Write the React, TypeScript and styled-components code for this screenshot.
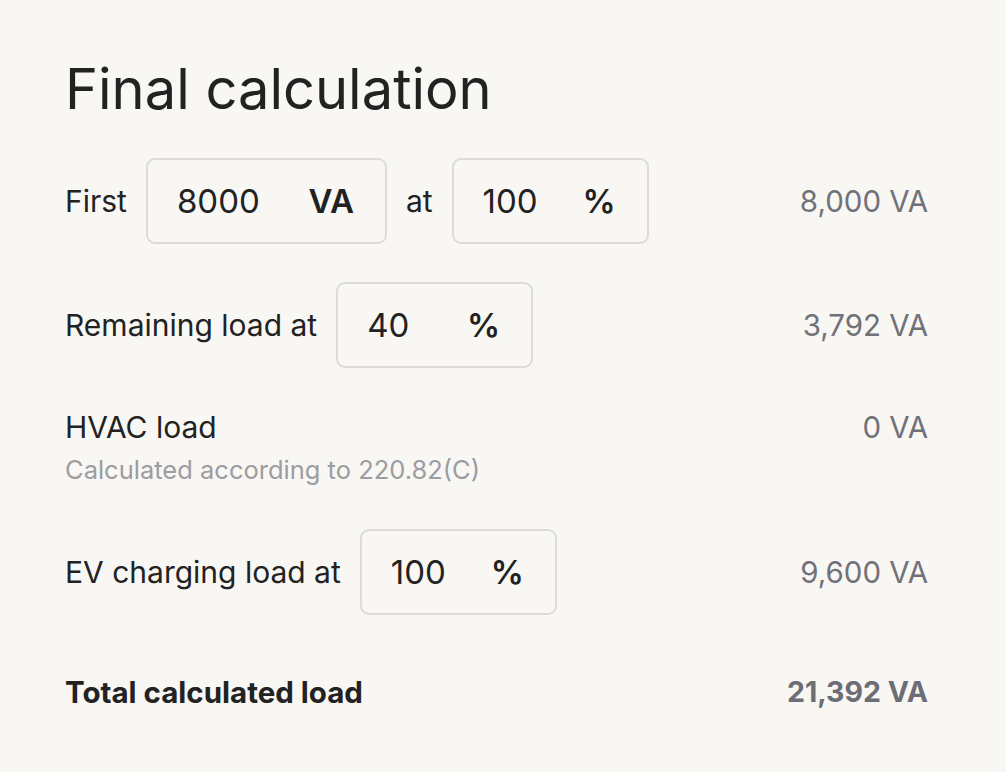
import { createGlobalStyle, styled } from "styled-components";

type Row = {
  label: string;
  value: string;
};

const GlobalStyle = createGlobalStyle`
  html, body {
    margin: 0;
    padding: 0;
    background: #f8f7f4;
  }

  body {
    font-family: Inter, "Noto Sans", sans-serif;
    color: #222222;
  }
`;

function Field({ amount, unit, wide }: { amount: string; unit: string; wide?: boolean }) {
  return (
    <FieldBox $wide={wide}>
      <Amount defaultValue={amount} $wide={wide} />
      <Unit>{unit}</Unit>
    </FieldBox>
  );
}

export default function App() {
  const hvac: Row = { label: "HVAC load", value: "0 VA" };

  return (
    <>
      <GlobalStyle />
      <Page>
        <Title>Final calculation</Title>

        <Line>
          <Inputs>
            <Label>First</Label>
            <Field amount="8000" unit="VA" wide />
            <Label>at</Label>
            <Field amount="100" unit="%" />
          </Inputs>
          <Value>8,000 VA</Value>
        </Line>

        <Line>
          <Inputs>
            <Label>Remaining load at</Label>
            <Field amount="40" unit="%" />
          </Inputs>
          <Value>3,792 VA</Value>
        </Line>

        <Plain>
          <Line>
            <Label>{hvac.label}</Label>
            <Value>{hvac.value}</Value>
          </Line>
          <Note>Calculated according to 220.82(C)</Note>
        </Plain>

        <Line>
          <Inputs>
            <Label>EV charging load at</Label>
            <Field amount="100" unit="%" />
          </Inputs>
          <Value>9,600 VA</Value>
        </Line>

        <Total>
          <TotalLabel>Total calculated load</TotalLabel>
          <TotalValue>21,392 VA</TotalValue>
        </Total>
      </Page>
    </>
  );
}

const Page = styled.main`
  width: 1006px;
  box-sizing: border-box;
  padding: 54px 78px 0 65px;

  display: flex;
  flex-direction: column;
`;

const Title = styled.h1`
  margin: 0 0 34px;
  font-size: 56px;
  font-weight: 400;
  line-height: 70px;
  letter-spacing: 0;
  color: #222222;
`;

const Line = styled.div`
  display: flex;
  flex-direction: row;
  align-items: center;
  justify-content: space-between;
  margin-bottom: 38px;
`;

const Inputs = styled.div`
  display: flex;
  flex-direction: row;
  align-items: center;
  gap: 19px;
`;

const Label = styled.span`
  font-size: 30px;
  line-height: 34px;
  color: #222222;
`;

const Value = styled.span`
  font-size: 29.5px;
  line-height: 34px;
  color: #717179;
`;

const FieldBox = styled.label<{ $wide?: boolean }>`
  box-sizing: border-box;
  width: ${(p) => (p.$wide ? 241 : 197)}px;
  height: 86px;
  padding: 0 31px 0 29px;
  border: 2px solid #dddbd6;
  border-radius: 9px;
  background: #f8f7f4;

  display: flex;
  flex-direction: row;
  align-items: center;
  justify-content: space-between;
`;

const Amount = styled.input<{ $wide?: boolean }>`
  width: ${(p) => (p.$wide ? 110 : 80)}px;
  padding: 0;
  border: none;
  outline: none;
  background: transparent;
  font-family: inherit;
  font-size: 33px;
  color: #222222;
`;

const Unit = styled.span`
  font-size: 33px;
  font-weight: 600;
  color: #222222;
`;

const Plain = styled.div`
  display: flex;
  flex-direction: column;
  gap: 11px;
  margin-top: 4px;
  margin-bottom: 44px;

  & > ${Line} {
    margin-bottom: 0;
  }
`;

const Note = styled.span`
  font-size: 25.5px;
  line-height: 30px;
  color: #9c9ca1;
`;

const Total = styled.div`
  display: flex;
  flex-direction: row;
  align-items: center;
  justify-content: space-between;
  margin-top: 22px;
  line-height: 34px;
`;

const TotalLabel = styled.span`
  font-size: 29.5px;
  font-weight: 700;
  color: #222222;
`;

const TotalValue = styled.span`
  font-size: 28.5px;
  font-weight: 700;
  color: #6d6d75;
`;
